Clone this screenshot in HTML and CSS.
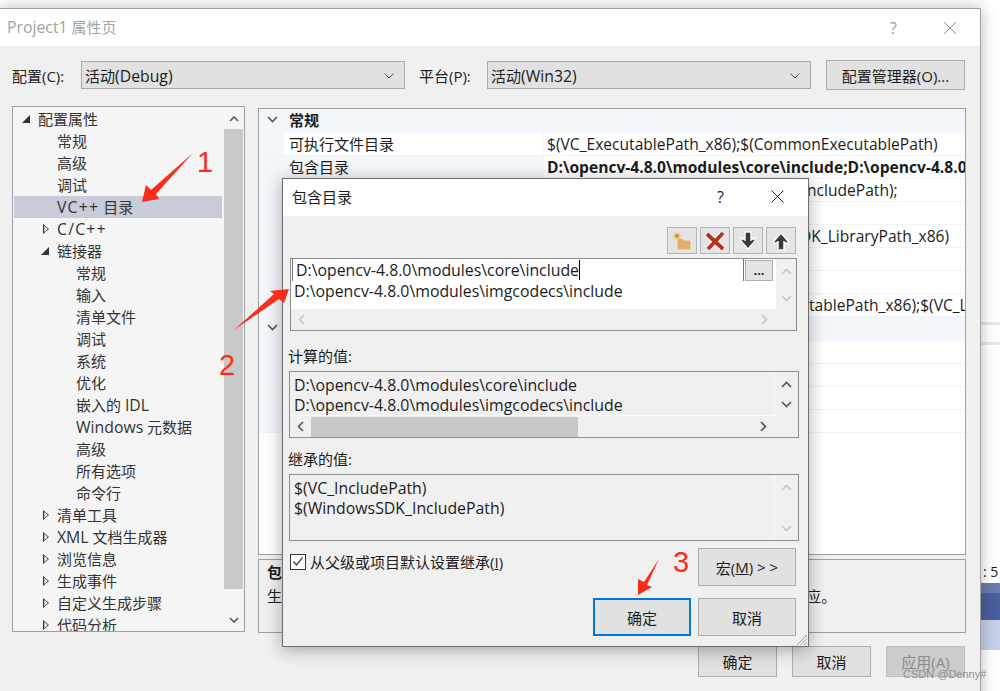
FILE: index.html
```html
<!DOCTYPE html>
<html lang="zh-CN">
<head>
    <meta charset="UTF-8">
    <title>Project1 属性页</title>
    <link rel="stylesheet" href="styles.css">
</head>
<body>
    <div class="behind">
        <div class="behind-line"></div>
        <div class="behind-line"></div>
        <div class="behind-text">: 5</div>
        <div class="behind-band"></div>
        <div class="behind-band2"></div>
    </div>

    <div class="window">
        <div class="titlebar">
            <span class="title"><span class="lat">Project1</span> 属性页</span>
            <span class="help">?</span>
            <svg class="close" width="14" height="14" viewBox="0 0 14 14"><path d="M1 1L13 13M13 1L1 13" stroke="#8a8a8a" fill="none"/></svg>
        </div>
        <div class="config-row">
            <label class="config-label">配置(C):</label>
            <div class="select"><span>活动<span class="lat">(Debug)</span></span><svg width="10" height="6" viewBox="0 0 10 6"><path d="M.5.5L5 5 9.500.5" stroke="#555" fill="none"/></svg></div>
            <label class="config-label platform">平台(P):</label>
            <div class="select"><span>活动<span class="lat">(Win32)</span></span><svg width="10" height="6" viewBox="0 0 10 6"><path d="M.5.5L5 5 9.500.5" stroke="#555" fill="none"/></svg></div>
            <button class="btn manager">配置管理器(O)...</button>
        </div>
        <div class="main">
            <div class="tree">
                <div class="tree-rows">
                    <div class="node lv0 open">配置属性</div>
                    <div class="node lv1">常规</div>
                    <div class="node lv1">高级</div>
                    <div class="node lv1">调试</div>
                    <div class="node lv1 selected"><span class="lat plus">VC++</span> 目录</div>
                    <div class="node lv1 closed"><span class="lat plus">C/C++</span></div>
                    <div class="node lv1 open">链接器</div>
                    <div class="node lv2">常规</div>
                    <div class="node lv2">输入</div>
                    <div class="node lv2">清单文件</div>
                    <div class="node lv2">调试</div>
                    <div class="node lv2">系统</div>
                    <div class="node lv2">优化</div>
                    <div class="node lv2">嵌入的 <span class="lat">IDL</span></div>
                    <div class="node lv2"><span class="lat">Windows</span> 元数据</div>
                    <div class="node lv2">高级</div>
                    <div class="node lv2">所有选项</div>
                    <div class="node lv2">命令行</div>
                    <div class="node lv1 closed">清单工具</div>
                    <div class="node lv1 closed"><span class="lat">XML</span> 文档生成器</div>
                    <div class="node lv1 closed">浏览信息</div>
                    <div class="node lv1 closed">生成事件</div>
                    <div class="node lv1 closed">自定义生成步骤</div>
                    <div class="node lv1 closed">代码分析</div>
                </div>
                <div class="tree-scroll">
                    <svg width="10" height="6" viewBox="0 0 10 6"><path d="M1 5L5 1 9 5" stroke="#555" stroke-width="1.6" fill="none"/></svg>
                    <div class="tree-thumb"></div>
                    <svg width="10" height="6" viewBox="0 0 10 6"><path d="M1 1L5 5 9 1" stroke="#555" stroke-width="1.6" fill="none"/></svg>
                </div>
            </div>
            <div class="right">
                <div class="props">
                    <div class="prop-head"><svg width="11" height="7" viewBox="0 0 11 7"><path d="M1 1L5.500 5.500 10 1" stroke="#555" stroke-width="1.6" fill="none"/></svg><b>常规</b></div>
                    <div class="prop"><span class="prop-name">可执行文件目录</span><span class="prop-val">$(VC_ExecutablePath_x86);$(CommonExecutablePath)</span></div>
                    <div class="prop"><span class="prop-name shaded">包含目录</span><span class="prop-val strong">D:\opencv-4.8.0\modules\core\include;D:\opencv-4.8.0\modules\imgcodecs\include</span></div>
                    <div class="prop"><span class="prop-name"></span><span class="prop-val pad-a">ncludePath);</span></div>
                    <div class="prop"><span class="prop-name"></span><span class="prop-val"></span></div>
                    <div class="prop"><span class="prop-name"></span><span class="prop-val pad-b">DK_LibraryPath_x86)</span></div>
                    <div class="prop"><span class="prop-name"></span><span class="prop-val"></span></div>
                    <div class="prop"><span class="prop-name"></span><span class="prop-val"></span></div>
                    <div class="prop"><span class="prop-name"></span><span class="prop-val pad-c">tablePath_x86);$(VC_LibraryPath)</span></div>
                    <div class="prop-head"><svg width="11" height="7" viewBox="0 0 11 7"><path d="M1 1L5.500 5.500 10 1" stroke="#555" stroke-width="1.6" fill="none"/></svg></div>
                    <div class="prop"><span class="prop-name"></span><span class="prop-val"></span></div>
                    <div class="prop"><span class="prop-name"></span><span class="prop-val"></span></div>
                    <div class="prop"><span class="prop-name"></span><span class="prop-val"></span></div>
                    <div class="prop"><span class="prop-name"></span><span class="prop-val"></span></div>
                </div>
                <div class="desc">
                    <b>包含目录</b>
                    <p>生成 <span class="lat">VC++</span> 项目期间，搜索包含文件时使用的路径。与环境变量 <span class="lat">INCLUDE</span> 相对应。</p>
                </div>
            </div>
        </div>
        <div class="footer">
            <button class="btn foot">确定</button>
            <button class="btn foot">取消</button>
            <button class="btn foot disabled">应用(A)</button>
        </div>
    </div>

    <div class="dialog">
        <div class="dialog-title">
            <span class="title-text">包含目录</span>
            <span class="dialog-help">?</span>
            <svg class="dialog-close" width="13" height="13" viewBox="0 0 13 13"><path d="M.5.5L12.500 12.500M12.500.5L.5 12.500" stroke="#222" fill="none"/></svg>
        </div>
        <div class="dialog-body">
            <div class="toolbar">
                <button class="tool">
                    <svg width="22" height="22" viewBox="0 0 22 22">
                        <path d="M6 8h5l2 2h7v10H6z" fill="#dcb272" stroke="#f5ead6"/>
                        <path d="M6 1v10M1 6h10M2.500 2.500l7 7M9.500 2.500l-7 7" stroke="#f0c27a" stroke-width="1.200"/>
                        <circle cx="6" cy="6" r="2" fill="#d9882a"/>
                    </svg>
                </button>
                <button class="tool">
                    <svg width="22" height="22" viewBox="0 0 22 22">
                        <path d="M3 4L19 19M19 3L4 19" stroke="#f5f5f5" stroke-width="6.500"/>
                        <path d="M3 4L19 19M19 3L4 19" stroke="#b3341d" stroke-width="3.800"/>
                    </svg>
                </button>
                <button class="tool">
                    <svg width="22" height="22" viewBox="0 0 22 22">
                        <path d="M8 2h6v8l4-2v3l-7 8-7-8V8l4 2z" fill="#3b3b3b" stroke="#fafafa" stroke-width="1.500"/>
                    </svg>
                </button>
                <button class="tool">
                    <svg width="22" height="22" viewBox="0 0 22 22">
                        <path d="M8 20h6v-8l4 2v-3l-7-8-7 8v3l4-2z" fill="#3b3b3b" stroke="#fafafa" stroke-width="1.500"/>
                    </svg>
                </button>
            </div>

            <div class="listbox edit-box">
                <div class="list-main">
                    <div class="list-white">
                        <div class="edit-row">
                            <span class="edit-text">D:\opencv-4.8.0\modules\core\include</span>
                            <span class="more">...</span>
                        </div>
                        <div class="list-row">D:\opencv-4.8.0\modules\imgcodecs\include</div>
                    </div>
                    <div class="hscroll">
                        <svg width="7" height="11" viewBox="0 0 7 11"><path d="M6 1L1.500 5.500 6 10" stroke="#c4c4c4" stroke-width="1.600" fill="none"/></svg>
                        <svg width="7" height="11" viewBox="0 0 7 11"><path d="M1 1L5.500 5.500 1 10" stroke="#c4c4c4" stroke-width="1.600" fill="none"/></svg>
                    </div>
                </div>
                <div class="vscroll short">
                    <svg width="11" height="7" viewBox="0 0 11 7"><path d="M1 6L5.500 1.500 10 6" stroke="#c4c4c4" stroke-width="1.600" fill="none"/></svg>
                    <svg width="11" height="7" viewBox="0 0 11 7"><path d="M1 1L5.500 5.500 10 1" stroke="#c4c4c4" stroke-width="1.600" fill="none"/></svg>
                </div>
            </div>

            <div class="section-label first">计算的值:</div>
            <div class="listbox">
                <div class="list-main">
                    <div class="list-plain">
                        <div class="list-row">D:\opencv-4.8.0\modules\core\include</div>
                        <div class="list-row">D:\opencv-4.8.0\modules\imgcodecs\include</div>
                    </div>
                    <div class="hscroll dark">
                        <svg width="7" height="11" viewBox="0 0 7 11"><path d="M6 1L1.500 5.500 6 10" stroke="#555" stroke-width="1.600" fill="none"/></svg>
                        <div class="h-thumb"></div>
                        <svg width="7" height="11" viewBox="0 0 7 11"><path d="M1 1L5.500 5.500 1 10" stroke="#555" stroke-width="1.600" fill="none"/></svg>
                    </div>
                </div>
                <div class="vscroll tight">
                    <svg width="11" height="7" viewBox="0 0 11 7"><path d="M1 6L5.500 1.500 10 6" stroke="#555" stroke-width="1.600" fill="none"/></svg>
                    <svg width="11" height="7" viewBox="0 0 11 7"><path d="M1 1L5.500 5.500 10 1" stroke="#555" stroke-width="1.600" fill="none"/></svg>
                </div>
            </div>

            <div class="section-label">继承的值:</div>
            <div class="listbox">
                <div class="list-main">
                    <div class="list-plain tall">
                        <div class="list-row">$(VC_IncludePath)</div>
                        <div class="list-row">$(WindowsSDK_IncludePath)</div>
                    </div>
                </div>
                <div class="vscroll wide">
                    <svg width="11" height="7" viewBox="0 0 11 7"><path d="M1 6L5.500 1.500 10 6" stroke="#c4c4c4" stroke-width="1.600" fill="none"/></svg>
                    <svg width="11" height="7" viewBox="0 0 11 7"><path d="M1 1L5.500 5.500 10 1" stroke="#c4c4c4" stroke-width="1.600" fill="none"/></svg>
                </div>
            </div>

            <div class="dialog-foot">
                <label class="check">
                    <span class="check-box"><svg width="12" height="11" viewBox="0 0 12 11"><path d="M1.500 5.500L4.500 9 10.500 1.500" stroke="#444" stroke-width="1.300" fill="none"/></svg></span>
                    <span>从父级或项目默认设置继承(<u>I</u>)</span>
                </label>
                <div class="dialog-buttons">
                    <button class="btn big">宏(<u>M</u>)&nbsp;&gt; &gt;</button>
                    <div class="button-pair">
                        <button class="btn big primary">确定</button>
                        <button class="btn big">取消</button>
                    </div>
                </div>
            </div>
        </div>
        <svg class="grip" width="12" height="12" viewBox="0 0 12 12"><path d="M11 1L1 11M11 4.500L4.500 11M11 8L8 11" stroke="#9a9a9a" fill="none"/></svg>
    </div>

    <svg class="marks" width="1000" height="691" viewBox="0 0 1000 691">
        <path d="M193 153L156 194 159 199 142 202 146 185 151 190Z" fill="#fb2c1c"/>
        <path d="M234 330L274 294 270 291 289 289 284 303 279 299Z" fill="#fb2c1c"/>
        <path d="M659 559L647 585 652 587 638 595 638 579 644 582Z" fill="#fb2c1c"/>
    </svg>
    <span class="mark-num one">1</span>
    <span class="mark-num two">2</span>
    <span class="mark-num three">3</span>
    <span class="watermark">CSDN @Denny#</span>
</body>
</html>
```

FILE: styles.css
```css
* {
    margin: 0;
    padding: 0;
    box-sizing: border-box;
}

html, body {
    width: 1000px;
    height: 691px;
    overflow: hidden;
}

body {
    background: #fff;
    position: relative;
    font-family: "Open Sans", "Noto Sans CJK SC", sans-serif;
    font-size: 15px;
    color: #1c1c1c;
}

button {
    font: inherit;
    color: inherit;
}

/* latin runs are a little bigger than the CJK around them */
.lat {
    font-size: 15.8px;
}

.plus {
    letter-spacing: 1.2px;
}

/* things showing past the right edge of the window */
.behind {
    position: absolute;
    left: 981px;
    top: 0;
    width: 19px;
    height: 691px;
}

.behind-line {
    position: absolute;
    left: 0;
    right: 0;
    top: 322px;
    height: 3px;
    background: #e6e6ee;
}

.behind-line + .behind-line {
    top: 342px;
}

.behind-text {
    position: absolute;
    left: 2px;
    top: 562px;
    font-size: 14px;
    line-height: 20px;
    white-space: nowrap;
}

.behind-band {
    position: absolute;
    left: 0;
    right: 0;
    top: 583px;
    height: 37px;
    background: linear-gradient(#6b7bb0 0, #6b7bb0 10px, #4a5f9e 10px);
}

.behind-band2 {
    position: absolute;
    left: 0;
    right: 0;
    top: 620px;
    height: 30px;
    background: #c4cfe9;
}

.window {
    position: absolute;
    left: -1px;
    top: 8px;
    width: 982px;
    height: 700px;
    background: #f0f0f0;
    border: 1px solid #a0a0a0;
    box-shadow: 0 0 14px rgba(0, 0, 0, 0.28);
}

.titlebar {
    height: 37px;
    background: #fff;
    display: flex;
    align-items: center;
    padding: 0 23px 0 7px;
}

.title {
    color: #a3a3a3;
    flex: 1;
    line-height: 37px;
}

.help {
    color: #9a9a9a;
    font-size: 16px;
    margin-right: 46px;
}

.config-row {
    display: flex;
    align-items: center;
    height: 30px;
    margin-top: 14px;
    padding-left: 12px;
}

.config-label {
    width: 69px;
    white-space: nowrap;
}

.platform {
    width: 68px;
    margin-left: 14px;
}

.select {
    width: 324px;
    height: 28px;
    background: #e1e1e1;
    border: 1px solid #a9a9a9;
    display: flex;
    align-items: center;
    justify-content: space-between;
    padding: 1px 10px 0 3px;
}

.btn {
    background: #e1e1e1;
    border: 1px solid #adadad;
    display: flex;
    align-items: center;
    justify-content: center;
}

.manager {
    width: 139px;
    height: 30px;
    margin-left: 15px;
}

.main {
    display: flex;
    margin-top: 16px;
    padding-left: 12px;
}

.tree {
    width: 233px;
    height: 526px;
    border: 1px solid #9a9fa8;
    background: #f5f5f5;
    display: flex;
    overflow: hidden;
}

.tree-rows {
    width: 209px;
    margin-left: 1px;
    padding-top: 1px;
    color: #333;
}

.node {
    height: 22px;
    line-height: 22px;
    white-space: nowrap;
    position: relative;
}

.lv0 { padding-left: 24px; }
.lv1 { padding-left: 43px; }
.lv2 { padding-left: 62px; }

.selected {
    background: #c9cbd8;
}

.open::before {
    content: "";
    position: absolute;
    top: 7px;
    border-style: solid;
    border-width: 0 0 8px 8px;
    border-color: transparent transparent #333 transparent;
}

.lv0.open::before { left: 8px; }
.lv1.open::before { left: 27px; }

.closed::before {
    content: "";
    position: absolute;
    left: 29px;
    top: 6px;
    width: 6px;
    height: 10px;
    background: #333;
    clip-path: polygon(0 0, 100% 50%, 0 100%, 0 0, 22% 18%, 22% 82%, 80% 50%, 22% 18%);
}

.tree-scroll {
    width: 21px;
    margin-left: 1px;
    display: flex;
    flex-direction: column;
    align-items: center;
    padding-top: 9px;
}

.tree-thumb {
    width: 19px;
    height: 460px;
    margin: 7px 0 28px;
    background: #c9c9c9;
}

.right {
    width: 708px;
    margin-left: 13px;
    margin-top: 2px;
}

.props {
    height: 447px;
    background: #fff;
    border: 1px solid #a0a0a0;
    overflow: hidden;
}

.prop-head {
    height: 24px;
    background: #f3f6fb;
    display: flex;
    align-items: center;
    padding: 0 0 3px 8px;
}

.prop-head b {
    margin-left: 11px;
}

.prop {
    height: 23px;
    display: flex;
    background: linear-gradient(90deg, #f3f6fb 25px, #fff 25px);
    border-bottom: 1px solid #f1f3f8;
    line-height: 23px;
    white-space: nowrap;
}

.prop-name {
    width: 284px;
    padding-left: 30px;
    flex: none;
}

.prop-name.shaded {
    background: #f3f6fb;
}

.prop-val {
    padding-left: 3px;
    border-left: 1px solid #f1f3f8;
    flex: 1;
    overflow: hidden;
    font-size: 15.6px;
}

.strong {
    font-weight: 700;
}

.pad-a { padding-left: 263px; }
.pad-b { padding-left: 256px; }
.pad-c { padding-left: 265px; }

.desc {
    height: 74px;
    margin-top: 4px;
    border: 1px solid #a0a0a0;
    padding: 1px 8px;
    line-height: 22px;
    white-space: nowrap;
    overflow: hidden;
}

.desc p {
    margin-top: 2px;
    letter-spacing: 0.35px;
}

.footer {
    display: flex;
    justify-content: flex-end;
    gap: 15px;
    margin-top: 13px;
    padding-right: 15px;
}

.foot {
    width: 79px;
    height: 31px;
}

.disabled {
    background: #ccc;
    color: #8a8a8a;
    border-color: #bfbfbf;
}

.dialog {
    position: absolute;
    left: 282px;
    top: 178px;
    width: 527px;
    height: 469px;
    background: #f0f0f0;
    border: 1px solid #6d6d6d;
    box-shadow: 0 3px 16px rgba(0, 0, 0, 0.32);
}

.dialog-title {
    height: 37px;
    background: #fff;
    display: flex;
    align-items: center;
    padding: 0 24px 2px 9px;
}

.title-text {
    flex: 1;
}

.dialog-help {
    font-size: 16px;
    margin-right: 47px;
}

.dialog-body {
    padding: 11px 12px 0 7px;
}

.toolbar {
    display: flex;
    justify-content: flex-end;
    gap: 3px;
}

.tool {
    width: 30px;
    height: 27px;
    background: #e4e4e4;
    border: 1px solid #b4b4b4;
    display: flex;
    align-items: center;
    justify-content: center;
}

.listbox {
    border: 1px solid #8e8e8e;
    display: flex;
    height: 67px;
    width: 510px;
}

.edit-box {
    height: 73px;
    width: 507px;
    margin-top: 4px;
}

.list-main {
    width: 485px;
    flex: none;
}

.list-white {
    height: 50px;
    background: #fff;
}

.list-white .list-row {
    padding-left: 3px;
}

.edit-row {
    height: 22px;
    display: flex;
    align-items: center;
    margin-left: 1px;
    padding-left: 3px;
    border-left: 1px solid #777;
}

.edit-text {
    width: 448px;
    height: 22px;
    line-height: 22px;
    border-right: 1px solid #777;
    position: relative;
    flex: none;
    font-size: 15.85px;
}

/* text caret */
.edit-text::after {
    content: "";
    position: absolute;
    left: 283px;
    top: 1px;
    width: 1px;
    height: 20px;
    background: #000;
}

.more {
    width: 28px;
    height: 21px;
    margin-left: 1px;
    background: #e4e4e4;
    border: 1px solid #adadad;
    font-size: 13px;
    font-weight: 700;
    line-height: 19px;
    text-align: center;
    flex: none;
}

.list-row {
    height: 20px;
    line-height: 20px;
    white-space: nowrap;
    font-size: 15.85px;
}

.list-plain {
    height: 44px;
    padding: 3px 0 0 4px;
    border-bottom: 1px solid #fafafa;
    border-right: 1px solid #fafafa;
}

.list-plain.tall {
    height: 65px;
    border-bottom: 0;
}

.hscroll {
    height: 21px;
    display: flex;
    justify-content: space-between;
    align-items: center;
    padding: 0 8px 0 7px;
}

.h-thumb {
    width: 267px;
    height: 20px;
    margin: 0 auto 0 7px;
    background: #c8c8c8;
}

.vscroll {
    flex: 1;
    display: flex;
    flex-direction: column;
    align-items: center;
    height: 100%;
    padding-top: 9px;
}

.vscroll.short { gap: 20px; }
.vscroll.tight { gap: 13px; }
.vscroll.wide { gap: 34px; }

.section-label {
    margin: 11px 0 4px -2px;
    height: 21px;
    line-height: 21px;
}

.section-label.first {
    margin-top: 15px;
}

.section-label + .listbox {
    margin-left: -1px;
}

.dialog-foot {
    display: flex;
    justify-content: space-between;
    margin-top: 7px;
}

.check {
    display: flex;
    align-items: center;
    gap: 4px;
    height: 27px;
}

.check-box {
    width: 16px;
    height: 16px;
    background: #fff;
    border: 1px solid #333;
    display: flex;
    align-items: center;
    justify-content: center;
}

.dialog-buttons {
    display: flex;
    flex-direction: column;
    align-items: flex-end;
    gap: 12px;
}

.big {
    width: 98px;
    height: 38px;
}

.button-pair {
    display: flex;
    gap: 7px;
}

.primary {
    border: 2px solid #0078d7;
}

.grip {
    position: absolute;
    right: 0;
    bottom: 0;
}

/* red annotations drawn over the screenshot */
.marks {
    position: absolute;
    left: 0;
    top: 0;
    pointer-events: none;
}

.mark-num {
    position: absolute;
    color: #fb2c1c;
    font-family: "Liberation Sans", sans-serif;
    font-size: 29px;
    line-height: 32px;
}

.one { left: 197px; top: 146px; }
.two { left: 219px; top: 349px; }
.three { left: 673px; top: 546px; }

.watermark {
    position: absolute;
    left: 903px;
    top: 667px;
    font-size: 11px;
    line-height: 15px;
    color: #8f8f8f;
    font-family: "Liberation Sans", sans-serif;
    white-space: nowrap;
}
```
